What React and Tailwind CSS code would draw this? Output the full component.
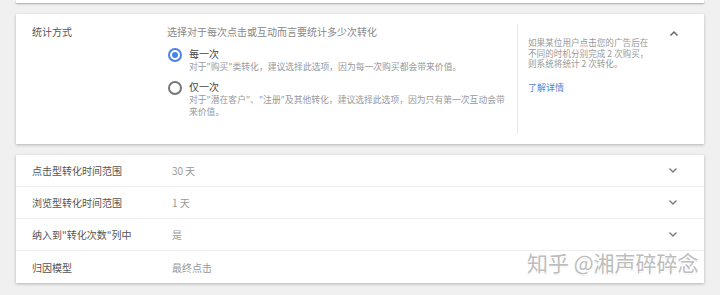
import React from "react";

const font = { fontFamily: '"Noto Sans CJK SC", "Noto Sans", sans-serif' };

function ChevronUp() {
  return (
    <svg width="10" height="7" viewBox="0 0 10 7" className="block">
      <path d="M1.5 5.5 L5 2 L8.5 5.5" fill="none" stroke="#666" strokeWidth="1.5" />
    </svg>
  );
}
function ChevronDown() {
  return (
    <svg width="10" height="7" viewBox="0 0 10 7" className="block">
      <path d="M1.5 1.5 L5 5 L8.5 1.5" fill="none" stroke="#777" strokeWidth="1.3" />
    </svg>
  );
}

function Radio({ checked }) {
  return checked ? (
    <div className="mt-[1px] flex h-[14px] w-[14px] shrink-0 items-center justify-center rounded-full border-2 border-[#4a82e8]">
      <div className="h-[6px] w-[6px] rounded-full bg-[#4a82e8]" />
    </div>
  ) : (
    <div className="mt-[1px] h-[14px] w-[14px] shrink-0 rounded-full border-2 border-[#777]" />
  );
}

function Row({ label, value, chevron = true, last }) {
  return (
    <div className={`flex h-[32px] items-center ${last ? "" : "border-b border-[#ededed]"}`}>
      <div className="w-[156px] whitespace-nowrap pl-[16px] text-[10px] text-[#555]">{label}</div>
      <div className="flex-1 text-[10px] text-[#999]">{value}</div>
      <div className="flex w-[36px] justify-start">{chevron && <ChevronDown />}</div>
    </div>
  );
}

export default function App() {
  return (
    <div className="relative h-[295px] w-[720px] overflow-hidden bg-[#f0f0f0]" style={font}>
      <div className="mx-[16px] h-[3px] bg-white shadow-[0_1px_2px_rgba(0,0,0,0.3)]" />
      <div className="mx-[16px] mt-[11px] flex h-[130px] bg-white shadow-[0_1px_3px_rgba(0,0,0,0.25)]">
        <div className="w-[151px] pl-[16px] pt-[12px] text-[10px] leading-[12px] text-[#555]">统计方式</div>
        <div className="w-[350px] pt-[12px]">
          <div className="text-[10px] leading-[12px] text-[#888]">选择对于每次点击或互动而言要统计多少次转化</div>
          <div className="mt-[9px] flex flex-col gap-[6px]">
            <div className="flex gap-[7px] pl-[1px]">
              <Radio checked />
              <div>
                <div className="text-[10px] leading-[14px] text-[#444]">每一次</div>
                <div className="whitespace-nowrap text-[8.8px] leading-[12.5px] text-[#999]">
                  对于"购买"类转化，建议选择此选项，因为每一次购买都会带来价值。
                </div>
              </div>
            </div>
            <div className="flex gap-[7px] pl-[1px]">
              <Radio />
              <div>
                <div className="text-[10px] leading-[14px] text-[#444]">仅一次</div>
                <div className="whitespace-nowrap text-[8.8px] leading-[12.5px] text-[#999]">
                  对于"潜在客户"、"注册"及其他转化，建议选择此选项，因为只有第一次互动会带
                  <br />
                  来价值。
                </div>
              </div>
            </div>
          </div>
        </div>
        <div className="my-[10px] w-px bg-[#e8e8e8]" />
        <div className="w-[151px] pl-[10px] pt-[23px]">
          <div className="whitespace-nowrap text-[8.6px] leading-[10.5px] text-[#999]">
            如果某位用户点击您的广告后在
            <br />
            不同的时机分别完成 2 次购买，
            <br />
            则系统将统计 2 次转化。
          </div>
          <div className="mt-[13px] text-[9px] leading-[12px] text-[#4a7fe0]">了解详情</div>
        </div>
        <div className="pt-[16px]">
          <ChevronUp />
        </div>
      </div>
      <div className="mx-[16px] mt-[11px] flex flex-col bg-white shadow-[0_1px_3px_rgba(0,0,0,0.25)]">
        <Row label="点击型转化时间范围" value="30 天" />
        <Row label="浏览型转化时间范围" value="1 天" />
        <Row label={'纳入到"转化次数"列中'} value="是" />
        <Row label="归因模型" value="最终点击" chevron={false} last />
      </div>
      <div
        className="absolute left-[527px] top-[250px] text-[21px] leading-[25px] text-[#bdbdbd]"
        style={{ textShadow: "1px 1px 0 #fff, -1px -1px 0 #fff, 1px -1px 0 #fff, -1px 1px 0 #fff, 0 1px 1px #999" }}
      >
        知乎 @湘声碎碎念
      </div>
    </div>
  );
}
